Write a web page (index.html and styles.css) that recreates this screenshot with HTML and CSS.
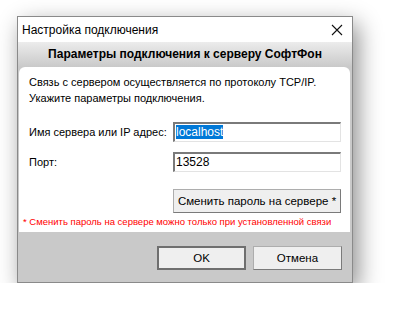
FILE: index.html
```html
<!DOCTYPE html>
<html lang="ru">
<head>
    <meta charset="UTF-8">
    <title>Настройка подключения</title>
    <link rel="stylesheet" href="styles.css">
</head>
<body>
    <div class="window">
        <div class="titlebar">
            <span class="title">Настройка подключения</span>
            <svg class="close" width="12" height="12" viewBox="0 0 12 12">
                <path d="M1 1 L11 11 M11 1 L1 11" stroke="#111" stroke-width="1.1" fill="none"/>
            </svg>
        </div>
        <div class="header">Параметры подключения к серверу СофтФон</div>
        <div class="panel">
            <p class="intro">Связь с сервером осуществляется по протоколу TCP/IP.<br>Укажите параметры подключения.</p>
            <div class="row">
                <label>Имя сервера или IP адрес:</label>
                <div class="field"><span class="sel">localhost</span></div>
            </div>
            <div class="row">
                <label>Порт:</label>
                <div class="field">13528</div>
            </div>
            <div class="row">
                <span></span>
                <button class="btn wide">Сменить пароль на сервере *</button>
            </div>
            <p class="note">* Сменить пароль на сервере можно только при установленной связи</p>
        </div>
        <div class="footer">
            <button class="btn default">OK</button>
            <button class="btn">Отмена</button>
        </div>
    </div>
</body>
</html>
```

FILE: styles.css
```css
body {
    margin: 0;
    background: #fff;
    font-family: "Liberation Sans", sans-serif;
    font-size: 11px;
    color: #000;
}

.window {
    margin: 16px 0 0 17px;
    width: 334px;
    border: 1px solid #8a8a8a;
    background: #c9c9c9;
    box-shadow: 5px 8px 22px rgba(0, 0, 0, 0.45);
    white-space: nowrap;
}

.titlebar {
    height: 25px;
    background: #fff;
    display: flex;
    align-items: center;
    justify-content: space-between;
    padding: 0 9px 0 4px;
}

.title {
    font-size: 12px;
}

.header {
    height: 25px;
    line-height: 25px;
    text-align: center;
    font-weight: bold;
    font-size: 12px;
    background: linear-gradient(#ececec, #c9c9c9);
}

.panel {
    margin: 0 2px 0 1px;
    background: #fff;
    border-radius: 6px 6px 0 0;
    padding: 7px 8px 6px 10px;
    height: 152px;
}

.intro {
    margin: 0;
    line-height: 16px;
}

.row {
    display: grid;
    grid-template-columns: 144px 168px;
    align-items: center;
    margin-top: 10px;
}

.row:first-of-type {
    margin-top: 16px;
}

.field {
    height: 20px;
    box-sizing: border-box;
    border: 1px solid #e3e3e3;
    border-top: 2px solid #7a7a7a;
    border-left: 2px solid #7a7a7a;
    padding: 1px 1px;
    line-height: 15px;
    font-size: 12px;
}

.sel {
    background: #0078d7;
    color: #fff;
}

.btn {
    font-family: "Liberation Sans", sans-serif;
    font-size: 11.5px;
    color: #000;
    background: #efefef;
    border: 1px solid #adadad;
    border-right-color: #7a7a7a;
    border-bottom-color: #7a7a7a;
    height: 24px;
    padding: 0;
}

.wide {
    margin-top: 7px;
}

.note {
    margin: 3px 0 0 -6px;
    color: #ff0000;
    font-size: 9.5px;
}

.footer {
    display: flex;
    justify-content: flex-end;
    gap: 7px;
    padding: 14px 10px 12px 0;
}

.footer .btn {
    width: 89px;
}

.default {
    border: 2px solid #6f6f6f;
}
```
